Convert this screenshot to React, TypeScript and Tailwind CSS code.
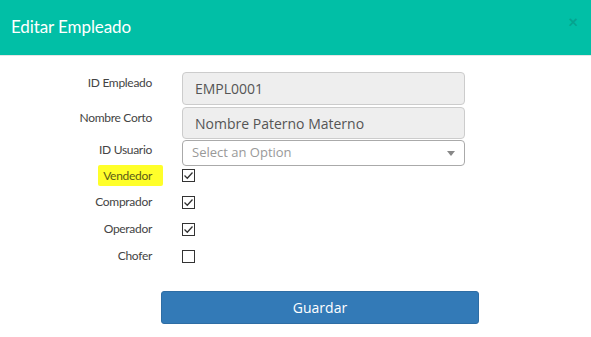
export default function App() {
    const flags = [
        { label: "Vendedor", checked: true, mark: true },
        { label: "Comprador", checked: true, mark: false },
        { label: "Operador", checked: true, mark: false },
        { label: "Chofer", checked: false, mark: false },
    ];

    return (
        <div className="w-[591px] h-[337px] bg-white overflow-hidden font-['Lato',sans-serif]">
            {/* header */}
            <div className="h-[56px] bg-[#01bfa6] border-b border-[#e5e5e5] flex items-center justify-between pl-[11px] pr-[13px]">
                <h1 className="text-[17px] text-white tracking-[-0.1px] mt-[-1px]">Editar Empleado</h1>
                <span className="text-[17px] font-bold text-[#05a38e] leading-none mt-[-12px]">×</span>
            </div>

            {/* form */}
            <div className="pt-[16px] flex flex-col">
                <div className="flex h-[33px]">
                    <div className="w-[152px] text-right text-[12px] text-[#444] tracking-[-0.3px] pt-[2px]">ID Empleado</div>
                    <div className="ml-[30px] w-[283px] h-[33px] bg-[#eeeeee] border border-[#cccccc] rounded-[4px] pl-[12px] flex items-center text-[14px] text-[#555] font-['Open_Sans',sans-serif]">EMPL0001</div>
                </div>
                <div className="flex h-[32px] mt-[2px]">
                    <div className="w-[152px] text-right text-[12px] text-[#444] tracking-[-0.3px] pt-[2px]">Nombre Corto</div>
                    <div className="ml-[30px] w-[283px] h-[32px] bg-[#eeeeee] border border-[#cccccc] rounded-[4px] pl-[12px] flex items-center text-[14px] text-[#555] font-['Open_Sans',sans-serif]">Nombre Paterno Materno</div>
                </div>
                <div className="flex h-[26px] mt-[1px]">
                    <div className="w-[152px] text-right text-[12px] text-[#444] tracking-[-0.3px] pt-[1px]">ID Usuario</div>
                    <div className="ml-[30px] w-[283px] h-[26px] bg-white border border-[#aaaaaa] rounded-[4px] pl-[9px] pr-[9px] flex items-center justify-between text-[13px] text-[#999] font-['Open_Sans',sans-serif]">
                        <span>Select an Option</span>
                        <span className="w-0 h-0 border-l-[4px] border-r-[4px] border-t-[5px] border-l-transparent border-r-transparent border-t-[#888]"></span>
                    </div>
                </div>

                {flags.map((f, i) => (
                    <div key={f.label} className={`flex items-center h-[20px] ${i === 0 ? "mt-[-1px]" : "mt-[7px]"}`}>
                        <div className="w-[152px] flex justify-end">
                            <span className={`text-[12px] tracking-[-0.3px] ${f.mark ? "bg-[#ffff2a] text-[#5c5c18] pl-[5px] pr-[11px] mr-[-11px] leading-[21px] rounded-[2px]" : "text-[#444] leading-[20px]"}`}>{f.label}</span>
                        </div>
                        <div className="ml-[30px] w-[13px] h-[13px] border border-[#333] bg-white flex items-center justify-center">
                            {f.checked && (
                                <svg width="11" height="11" viewBox="0 0 11 11">
                                    <path d="M1.5 5.5 L4.3 8.3 L9.5 2.5" fill="none" stroke="#333" strokeWidth="1.3" />
                                </svg>
                            )}
                        </div>
                    </div>
                ))}

                <div className="mt-[25px] pl-[161px]">
                    <button className="w-[318px] h-[33px] bg-[#337ab7] border border-[#2e6da4] rounded-[3px] text-white text-[14px] font-['Open_Sans',sans-serif]">Guardar</button>
                </div>
            </div>
        </div>
    );
}
